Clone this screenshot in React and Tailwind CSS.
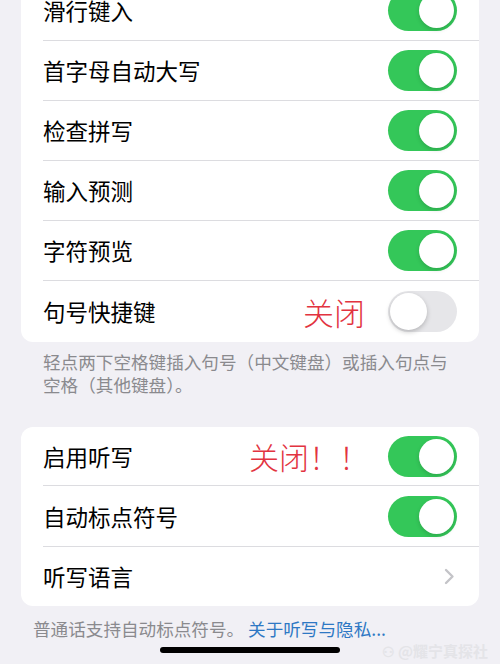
import React from "react";

const font = { fontFamily: '"Noto Sans CJK SC", "Noto Sans", sans-serif' };

function Toggle({ on }) {
  return on ? (
    <div className="w-[69px] h-[41px] rounded-full bg-[#34c759] flex items-center justify-end pr-[3px] shrink-0">
      <div className="w-[35px] h-[35px] rounded-full bg-white shadow-[0_2px_4px_rgba(0,0,0,0.15)]" />
    </div>
  ) : (
    <div className="w-[69px] h-[41px] rounded-full bg-[#e6e6e9] flex items-center justify-start pl-[2px] shrink-0">
      <div className="w-[37px] h-[37px] rounded-full bg-white shadow-[0_2px_5px_rgba(0,0,0,0.22)]" />
    </div>
  );
}

function Row({ label, right, note, last, h = "h-[60px]" }) {
  return (
    <div className={`flex items-stretch pl-[22px] ${h}`}>
      <div className={`flex-1 flex items-center pr-[22px] ${last ? "" : "border-b border-[#dcdce0]"}`}>
        <span className="text-[22.5px] text-black flex-1 leading-none">{label}</span>
        {note}
        {right}
      </div>
    </div>
  );
}

function Chevron() {
  return (
    <svg width="11" height="17" viewBox="0 0 11 17" className="mr-[2px]">
      <path d="M2 2 L8.5 8.5 L2 15" fill="none" stroke="#c4c4c8" strokeWidth="2.4" strokeLinecap="round" strokeLinejoin="round" />
    </svg>
  );
}

export default function App() {
  return (
    <div className="relative w-[500px] h-[664px] overflow-hidden bg-[#f1f0f5]" style={font}>
      <div className="px-[21px]">
        <div className="-mt-[19px] bg-white rounded-[12px] overflow-hidden">
          <Row label="滑行键入" right={<Toggle on />} />
          <Row label="首字母自动大写" right={<Toggle on />} />
          <Row label="检查拼写" right={<Toggle on />} />
          <Row label="输入预测" right={<Toggle on />} />
          <Row label="字符预览" right={<Toggle on />} />
          <Row
            label="句号快捷键"
            last
            h="h-[61px]"
            note={<span className="text-[31px] font-light text-[#e23340] mr-[23px] leading-none">关闭</span>}
            right={<Toggle />}
          />
        </div>
        <p className="pl-[22px] pt-[8px] text-[17.6px] leading-[23px] text-[#8a8a8e] whitespace-nowrap">
          轻点两下空格键插入句号（中文键盘）或插入句点与
          <br />
          空格（其他键盘）。
        </p>
        <div className="mt-[31px] bg-white rounded-[12px] overflow-hidden">
          <Row
            label="启用听写"
            h="h-[59px]"
            note={<span className="text-[30px] font-light text-[#e23340] mr-[19px] leading-none">关闭！！</span>}
            right={<Toggle on />}
          />
          <Row label="自动标点符号" h="h-[61px]" right={<Toggle on />} />
          <Row label="听写语言" last h="h-[59px]" right={<Chevron />} />
        </div>
        <p className="pl-[12px] pt-[11px] text-[17.6px] leading-[23px] text-[#8a8a8e] whitespace-nowrap">
          普通话支持自动标点符号。 <span className="text-[#2e78c4]">关于听写与隐私...</span>
        </p>
      </div>
      <div className="absolute left-[160px] top-[647px] w-[180px] h-[6px] rounded-full bg-black" />
      <div className="absolute right-[12px] top-[640px] flex items-center gap-[3px] text-[15px] text-[#e4e4e8] font-bold">
        <span className="text-[14px]">⚇</span>
        <span>@耀宁真探社</span>
      </div>
    </div>
  );
}
